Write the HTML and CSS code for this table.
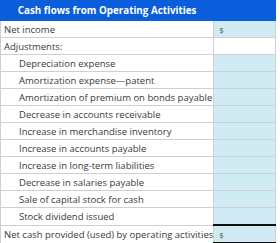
FILE: index.html
```html
<!DOCTYPE html>
<html lang="en">
<head>
  <meta charset="UTF-8">
  <title>Cash flows from Operating Activities</title>
  <link rel="stylesheet" href="styles.css">
</head>
<body>
  <table class="cf-table">
    <tr class="cf-head">
      <th>Cash flows from Operating Activities</th>
      <th></th>
    </tr>
    <tr>
      <td>Net income</td>
      <td class="amt">$</td>
    </tr>
    <tr>
      <td>Adjustments:</td>
      <td class="blank"></td>
    </tr>
    <tr><td class="sub">Depreciation expense</td><td class="amt"></td></tr>
    <tr><td class="sub">Amortization expense—patent</td><td class="amt"></td></tr>
    <tr><td class="sub">Amortization of premium on bonds payable</td><td class="amt"></td></tr>
    <tr><td class="sub">Decrease in accounts receivable</td><td class="amt"></td></tr>
    <tr><td class="sub">Increase in merchandise inventory</td><td class="amt"></td></tr>
    <tr><td class="sub">Increase in accounts payable</td><td class="amt"></td></tr>
    <tr><td class="sub">Increase in long-term liabilities</td><td class="amt"></td></tr>
    <tr><td class="sub">Decrease in salaries payable</td><td class="amt"></td></tr>
    <tr><td class="sub">Sale of capital stock for cash</td><td class="amt"></td></tr>
    <tr><td class="sub">Stock dividend issued</td><td class="amt"></td></tr>
    <tr class="total">
      <td>Net cash provided (used) by operating activities</td>
      <td class="amt">$</td>
    </tr>
  </table>
</body>
</html>
```

FILE: styles.css
```css
body {
  margin: 0;
  background: #ffffff;
  font-family: 'Open Sans', sans-serif;
  color: #3a3a3a;
}

.cf-table {
  border-collapse: collapse;
  width: 276px;
  font-size: 9.5px;
}

.cf-table th,
.cf-table td {
  height: 16px;
  padding: 0 0 0 3px;
  border: 1px solid #cfcfcf;
  text-align: left;
  white-space: nowrap;
}

.cf-head th {
  background-color: #0a5ddb;
  color: #ffffff;
  font-size: 9.8px;
  font-weight: bold;
  text-align: center;
  height: 18px;
  padding: 0 0 1px 0;
  border-color: #0a5ddb;
}

.cf-table td.sub {
  padding-left: 18px;
}

.cf-table td.amt {
  width: 58px;
  background-color: #d0ebf4;
  color: #555;
  font-size: 8px;
  padding-left: 5px;
}

.cf-table td.blank {
  background-color: #ffffff;
}

.total td.amt {
  border-top: 2px solid #111;
  border-bottom: 3px double #111;
}
```
